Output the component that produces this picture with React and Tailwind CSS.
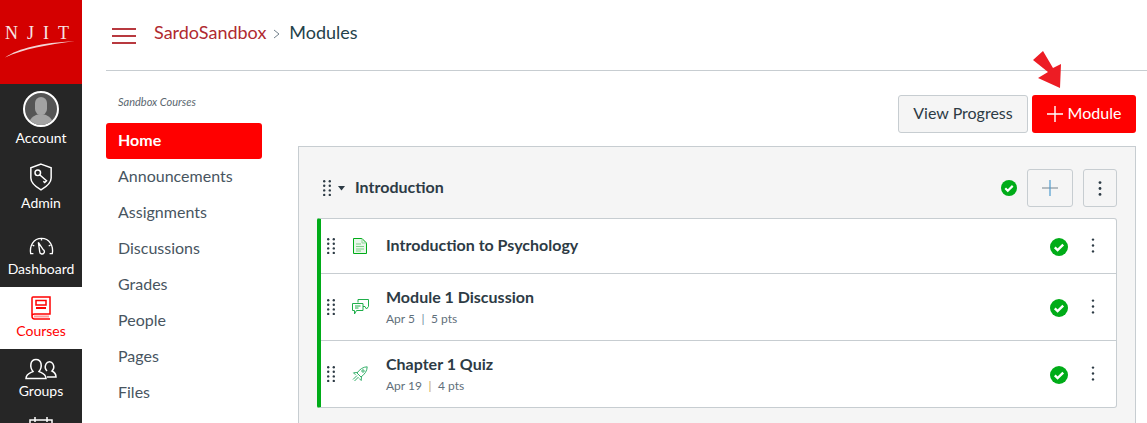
const navLinks = ["Announcements", "Assignments", "Discussions", "Grades", "People", "Pages", "Files", "Syllabus"];

const rows = [
  { title: "Introduction to Psychology", icon: "page", h: "h-[54px]" },
  { title: "Module 1 Discussion", date: "Apr 5", pts: "5 pts", sep: "text-[#6b8aa3]", icon: "chat", h: "h-[67px]" },
  { title: "Chapter 1 Quiz", date: "Apr 19", pts: "4 pts", sep: "text-[#c9a25e]", icon: "quiz", h: "h-[67px]" },
];

function Grip({ className }) {
  return (
    <svg width="8" height="16" viewBox="0 0 8 16" className={className} fill="#2d3b45">
      {[1.2, 6.8].map((x) =>
        [1.2, 5.8, 10.4, 15].map((y) => <circle key={x + "-" + y} cx={x} cy={y} r="1.2" />)
      )}
    </svg>
  );
}

function Kebab({ r = 1.4 }) {
  return (
    <svg width="4" height="15" viewBox="0 0 4 15" fill="#2d3b45">
      <circle cx="2" cy="1.6" r={r} />
      <circle cx="2" cy="7.5" r={r} />
      <circle cx="2" cy="13.4" r={r} />
    </svg>
  );
}

function Check({ size }) {
  return (
    <svg width={size} height={size} viewBox="0 0 18 18">
      <circle cx="9" cy="9" r="9" fill="#00ac18" />
      <path d="M4.8 9.3 L7.6 12 L13.2 6.6" fill="none" stroke="#fff" strokeWidth="2.4" />
    </svg>
  );
}

function RowIcon({ type }) {
  if (type === "page")
    return (
      <svg width="14" height="16" viewBox="0 0 14 16" fill="none" stroke="#00ac18" strokeWidth="1">
        <path d="M0.5 0.5 H9 L13.5 5 V15.5 H0.5 Z" fill="#e9f7ea" />
        <path d="M9 0.5 V5 H13.5" stroke="#8fd69a" />
        <path d="M3 6 H8 M3 8.5 H11 M3 11 H11 M3 13 H8" stroke="#7ccf85" />
      </svg>
    );
  if (type === "chat")
    return (
      <svg width="17" height="16" viewBox="0 0 17 16" fill="none" stroke="#1fae4a" strokeWidth="1">
        <path d="M6 3.5 V0.5 H16.5 V7.5 L14.5 10 L13 7.5 H11" />
        <path d="M0.5 4.5 H11 V11.5 H4.5 L2.5 15 V11.5 H0.5 Z" />
        <path d="M3 7 H8.5 M3 9 H6.5" />
      </svg>
    );
  return (
    <svg width="16" height="16" viewBox="0 0 16 16" fill="none" stroke="#35b06a" strokeWidth="1">
      <path d="M15.2 0.8 C11 1 8 3 5 7 L9 11 C13 8 15 5 15.2 0.8 Z" />
      <path d="M5.5 6.5 L1.5 6.8 L3.5 8.8 M9.5 10.5 L9.2 14.5 L7.2 12.5" />
      <path d="M5 9.5 L1 13.5 M6.5 11 L2.5 15" />
      <circle cx="11" cy="5" r="1.2" />
    </svg>
  );
}

function SideItem({ label, active, height, children }) {
  return (
    <div className={`flex shrink-0 flex-col items-center justify-end ${height} ${active ? "bg-white text-[#ff0000]" : "text-white"}`}>
      {children}
      <span className="text-[14px] leading-[18px]">{label}</span>
    </div>
  );
}

export default function App() {
  return (
    <div className="relative flex h-[423px] w-[1147px] overflow-hidden bg-white font-['Lato','Liberation_Sans',sans-serif] text-[#2d3b45]">
      <aside className="flex w-[82px] shrink-0 flex-col bg-[#262626]">
        <div className="h-[84px] shrink-0 bg-[#d40000] pl-[5px] pt-[22px]">
          <div className="relative h-[34px] w-[72px]">
            <span className="block font-['Liberation_Serif',serif] text-[18px] leading-[22px] tracking-[9px] text-[#f7e4e4]">NJIT</span>
            <svg width="70" height="17" viewBox="0 0 70 17" className="absolute left-0 top-[19px]">
              <path d="M0 16.5 C14 7 36 2 70 0 C42 4 18 8 0 16.5 Z" fill="#f4d4d4" />
            </svg>
          </div>
        </div>
        <SideItem label="Account" height="h-[63px]">
          <div className="relative mb-[2px] h-[36px] w-[36px] overflow-hidden rounded-full border-2 border-white bg-[#555]">
            <div className="absolute left-[10px] top-[4px] h-[18px] w-[12px] rounded-full bg-[#a3a3a3]" />
            <div className="absolute left-[3px] top-[21px] h-[16px] w-[26px] rounded-t-full bg-[#a3a3a3]" />
          </div>
        </SideItem>
        <SideItem label="Admin" height="h-[65px]">
          <svg width="24" height="28" viewBox="0 0 26 30" fill="none" stroke="#fff" strokeWidth="1.6" className="mb-[3px]">
            <path d="M13 1 L24 5 V16 C24 22 18 26 13 29 C8 26 2 22 2 16 V5 Z" />
            <circle cx="9.5" cy="10.5" r="3" />
            <path d="M11.5 12.5 L19 19 L17 21 L15.5 19.5" />
          </svg>
        </SideItem>
        <SideItem label="Dashboard" height="h-[75px] pb-[9px]">
          <svg width="27" height="18" viewBox="0 0 28 20" fill="none" stroke="#fff" strokeWidth="1.5" className="mb-[5px]">
            <path d="M5 18.5 H2 C0.5 10 5 1.5 14 1.5 C23 1.5 27.5 10 26 18.5 H23" />
            <path d="M10.5 6 L15.8 14 A2.6 2.6 0 1 1 12 16.2 Z" />
            <path d="M14 1.5 V4 M4 9 L6 10 M24 9 L22 10" />
          </svg>
        </SideItem>
        <SideItem label="Courses" active height="h-[62px] pb-[9px]">
          <svg width="20" height="24" viewBox="0 0 20 24" fill="none" stroke="#ff0000" strokeWidth="1.5" className="mb-[2px]">
            <path d="M1 20 V2 C1 1.2 1.5 1 2 1 H19 V18 H3.5 C1.5 18 1 19 1 20 C1 22 2 23 3.5 23 H19" />
            <path d="M5 4.5 H15 V9 H5 Z" />
            <path d="M5 12 H15" strokeWidth="2" />
            <path d="M3 20.5 H18" stroke="#ff9c9c" strokeWidth="2" />
          </svg>
        </SideItem>
        <SideItem label="Groups" height="h-[51px]">
          <svg width="32" height="22" viewBox="0 0 32 22" fill="none" stroke="#fff" strokeWidth="1.5" className="mb-[2px]">
            <path d="M1 20.5 C1 16 5 15 8 13.5 C6 11 5.5 8 6 5.5 C7 0 15 0 16 5.5 C16.5 8 16 11 14 13.5 C17 15 21 16 21 20.5 Z" />
            <path d="M22 13 C20 11 20 8 21 6 C22.5 3 26.5 3 28 6 C29 8 29 11 27 13 C29 14 31 15 31 19 H22" />
          </svg>
        </SideItem>
        <div className="flex shrink-0 justify-center pt-[16px]">
          <svg width="24" height="24" viewBox="0 0 24 24" fill="none" stroke="#fff" strokeWidth="1.5">
            <path d="M1 4 H23 V22 H1 Z M1 9 H23 M6 1 V6 M18 1 V6" />
          </svg>
        </div>
      </aside>

      <div className="flex min-w-0 flex-1 flex-col pl-[24px]">
        <header className="flex h-[71px] shrink-0 items-center border-b border-[#c7cdd1] pb-[5px] pl-[6px]">
          <div className="mt-[6px] flex w-[24px] flex-col gap-[5px]">
            <span className="h-[2px] bg-[#b8393f]" />
            <span className="h-[2px] bg-[#b8393f]" />
            <span className="h-[2px] bg-[#b8393f]" />
          </div>
          <span className="ml-[18px] text-[18px] text-[#b02a30]">SardoSandbox</span>
          <svg width="7" height="10" viewBox="0 0 7 10" fill="none" stroke="#73818c" className="ml-[7px] mt-[2px]">
            <path d="M1 1 L6 5 L1 9" />
          </svg>
          <span className="ml-[9px] text-[18px] text-[#24424a]">Modules</span>
        </header>

        <div className="flex min-h-0 flex-1">
          <nav className="w-[156px] shrink-0 pt-[25px]">
            <p className="pl-[12px] text-[11px] italic leading-[12px] text-[#5b6770]">Sandbox Courses</p>
            <div className="mt-[15px] flex h-[36px] items-center rounded-[3px] bg-[#ff0000] pb-[2px] pl-[12px] text-[16px] font-bold text-white">Home</div>
            {navLinks.map((l) => (
              <div key={l} className="flex h-[36px] items-center pb-[2px] pl-[12px] text-[16px] text-[#48555f]">{l}</div>
            ))}
          </nav>

          <main className="ml-[36px] w-[838px] min-w-0 pt-[24px]">
            <div className="flex justify-end gap-[4px]">
              <button className="h-[38px] w-[130px] rounded-[3px] border border-[#c7cdd1] bg-[#f5f5f5] pb-[3px] text-[16px] text-[#2d3b45]">View Progress</button>
              <button className="flex h-[38px] w-[104px] items-center justify-center gap-[5px] rounded-[3px] bg-[#ff0000] pb-[3px] text-[16px] text-white">
                <svg width="16" height="16" viewBox="0 0 16 16" stroke="#fff" strokeWidth="1.4" className="mt-[3px]">
                  <path d="M8 0 V16 M0 8 H16" />
                </svg>
                Module
              </button>
            </div>

            <section className="mt-[13px] h-[400px] border border-[#c7cdd1] bg-[#f5f5f5] px-[18px]">
              <div className="flex h-[71px] items-center pt-[11px]">
                <Grip className="ml-[6px]" />
                <svg width="8" height="5" viewBox="0 0 8 5" fill="#2d3b45" className="ml-[7px]">
                  <path d="M0 0 H7 L3.5 4.5 Z" />
                </svg>
                <span className="ml-[9px] pb-[2px] text-[16px] font-bold text-[#2d3b45]">Introduction</span>
                <div className="ml-auto flex items-center">
                  <Check size={16} />
                  <button className="ml-[10px] flex h-[38px] w-[46px] items-center justify-center rounded-[3px] border border-[#c7cdd1]">
                    <svg width="16" height="16" viewBox="0 0 16 16" strokeWidth="1.2">
                      <path d="M0 8 H16" stroke="#8b969e" />
                      <path d="M8 0 V16" stroke="#4f9ccf" />
                    </svg>
                  </button>
                  <button className="ml-[10px] flex h-[38px] w-[34px] items-center justify-center rounded-[3px] border border-[#c7cdd1]">
                    <Kebab />
                  </button>
                </div>
              </div>

              <div className="rounded-l-[2px] rounded-r-[3px] border border-l-4 border-[#c7cdd1] border-l-[#00ac18] bg-white">
                {rows.map((r, i) => (
                  <div key={r.title} className={`flex items-center ${r.h} ${i > 0 ? "border-t border-[#c7cdd1]" : ""}`}>
                    <Grip className="ml-[6px]" />
                    <div className="ml-[15px] flex w-[20px] justify-center">
                      <RowIcon type={r.icon} />
                    </div>
                    <div className={`ml-[16px] ${r.date ? "" : "pb-[3px]"}`}>
                      <p className="text-[16px] font-bold leading-[20px] text-[#2d3b45]">{r.title}</p>
                      {r.date && (
                        <p className="mt-[4px] text-[12px] leading-[16px] text-[#5f6f7b]">
                          {r.date}
                          <span className={`mx-[6.5px] ${r.sep}`}>|</span>
                          {r.pts}
                        </p>
                      )}
                    </div>
                    <div className="ml-auto flex items-center">
                      <div className="mt-[1px] flex">
                        <Check size={18} />
                      </div>
                      <div className="ml-[23px] mr-[21px] flex pb-[2px]">
                        <Kebab r={1.2} />
                      </div>
                    </div>
                  </div>
                ))}
              </div>
            </section>
          </main>
        </div>
      </div>

      <svg width="32" height="40" viewBox="0 0 32 40" className="absolute left-[1032px] top-[50px]" fill="#ed1c24">
        <path d="M1 10 L11 1 L21 18 L29 14 L28 38 L6 28 L16 22 Z" />
      </svg>
    </div>
  );
}
